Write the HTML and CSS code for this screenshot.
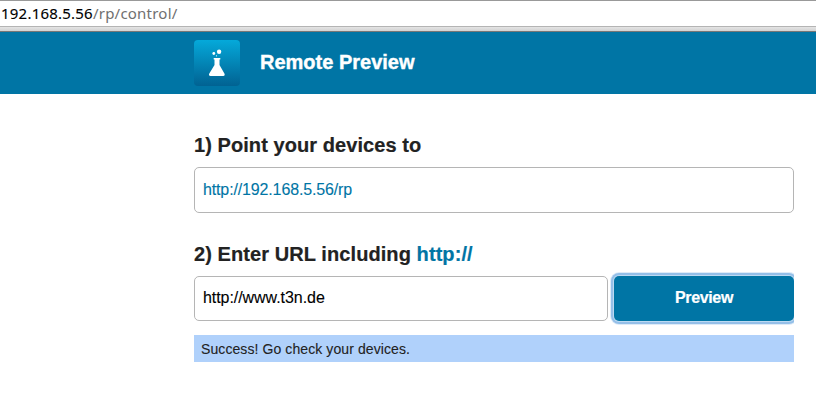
FILE: index.html
```html
<!DOCTYPE html>
<html lang="en">
<head>
<meta charset="utf-8">
<title>Remote Preview</title>
<link rel="stylesheet" href="styles.css">
</head>
<body>
<div class="address"><span class="host">192.168.5.56</span><span class="path">/rp/control/</span></div>
<div class="chrome-edge"></div>
<header class="header">
  <svg class="logo" width="46" height="46" viewBox="0 0 46 46" aria-hidden="true">
    <defs><linearGradient id="g" x1="0" y1="0" x2="0" y2="1"><stop offset="0" stop-color="#05a9da"/><stop offset="1" stop-color="#016292"/></linearGradient></defs>
    <rect width="46" height="46" rx="4" fill="url(#g)"/>
    <g fill="#fff">
      <circle cx="25.1" cy="11.7" r="2.2"/>
      <circle cx="19.8" cy="13.500" r="1.4"/>
      <circle cx="22.5" cy="15.800" r=".6"/>
      <path d="M19.700 18h6.600v1.400h-.8v5.600l4.900 8.600q1 2.400-1.200 2.400H16.500q-2.200 0-1.200-2.400l5.200-8.600v-5.600h-.8z"/>
    </g>
  </svg>
  <h1 class="title">Remote Preview</h1>
</header>
<main class="content">
  <h2 class="heading"><span class="step1">1) Point your devices to</span></h2>
  <div class="field device"><a class="device-url">http://192.168.5.56/rp</a></div>
  <h2 class="heading second"><span class="step2">2) Enter URL including <span class="accent">http://</span></span></h2>
  <form class="row">
    <div class="field entry"><span class="entry-url">http://www.t3n.de</span></div>
    <button class="button" type="button"><span class="button-label">Preview</span></button>
  </form>
  <p class="notice"><span class="notice-text">Success! Go check your devices.</span></p>
</main>
</body>
</html>
```
FILE: styles.css
```css
* { box-sizing: border-box; }
body { margin: 0; height: 417px; overflow: hidden; background: #fff; color: #222; font-family: "Liberation Sans", sans-serif; }
.address { height: 26px; border-top: 1px solid #999; padding-left: 1px; font: 15px/25px "Noto Sans", sans-serif; letter-spacing: .22px; white-space: pre; }
.host { color: #000; -webkit-text-stroke: .12px #000; }
.path { color: #707070; }
.chrome-edge { height: 6px; border-top: 1px solid #b4b4b4; border-bottom: 1px solid #777; background: linear-gradient(#e4e4e4, #d2d2d2); }
.header { display: flex; height: 62px; padding: 8px 0 0 194px; background: #0075a5; }
.logo { display: block; }
.title { margin: 0 0 0 20px; font-size: 20px; line-height: 45px; color: #fff; -webkit-text-stroke: .4px #fff; }
.content { width: 600px; margin-left: 194px; padding-top: 33px; }
.heading { margin: 0; height: 40px; font-size: 20px; line-height: 37px; letter-spacing: .07px; white-space: nowrap; -webkit-text-stroke: .2px; }
.second { margin-top: 23px; letter-spacing: .08px; }
.accent { color: #0075a5; }
.field { border: 1px solid #b5b5b5; border-radius: 5px; padding-left: 8px; font-size: 16px; background: #fff; }
.device { height: 46px; line-height: 44px; letter-spacing: -.14px; }
.device-url { color: #0075a5; -webkit-text-stroke: .1px; }
.row { display: flex; gap: 6px; overflow: hidden; margin: -4px 0 0; padding: 4px 0; }
.entry { width: 414px; height: 45px; line-height: 42px; letter-spacing: -.06px; color: #000; -webkit-text-stroke: .1px; }
.button { width: 180px; height: 45px; padding: 0 0 2px; border: 0; border-radius: 5px; background: #0075a5; box-shadow: 0 0 0 1px #bcd9f2, 0 0 0 3px #94bfe8, 0 0 0 4px #deebf8; color: #fff; font: bold 16px/41px "Liberation Sans", sans-serif; letter-spacing: -.35px; -webkit-text-stroke: .2px; }
.notice { margin: 10px 0 0; height: 27px; padding-left: 7px; background: #b0d1fb; font-size: 14px; line-height: 28px; letter-spacing: .09px; -webkit-text-stroke: .1px; }
```
